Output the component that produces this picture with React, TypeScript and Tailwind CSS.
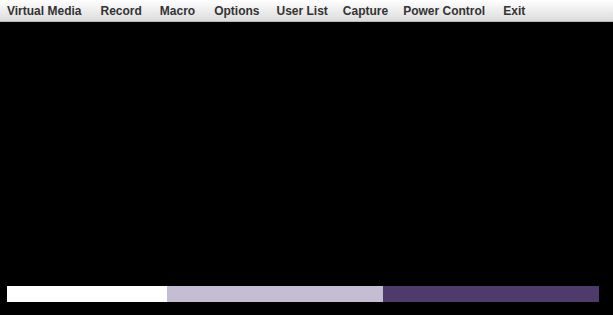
export default function App() {
  return (
    <div className="w-[613px] h-[315px] bg-black flex flex-col overflow-hidden" style={{ fontFamily: '"Liberation Sans", Arial, sans-serif' }}>
      <div className="h-[22px] shrink-0 flex items-center pl-[7px] bg-gradient-to-b from-[#ffffff] to-[#dcdcdc] border-b border-[#b8b8b8] text-[12px] font-bold text-[#333333]">
        <span className="leading-none">Virtual Media</span>
        <span className="leading-none ml-[19px]">Record</span>
        <span className="leading-none ml-[18px]">Macro</span>
        <span className="leading-none ml-[19px]">Options</span>
        <span className="leading-none ml-[17px]">User List</span>
        <span className="leading-none ml-[15px]">Capture</span>
        <span className="leading-none ml-[15px]">Power Control</span>
        <span className="leading-none ml-[18px]">Exit</span>
      </div>
      <div className="flex-1" />
      <div className="flex ml-[7px] mb-[13px] h-[16px] w-[592px]">
        <div className="w-[160px] bg-white" />
        <div className="w-[216px] bg-[#c5bdd2]" />
        <div className="w-[216px] bg-[#4f3a6c]" />
      </div>
    </div>
  );
}
